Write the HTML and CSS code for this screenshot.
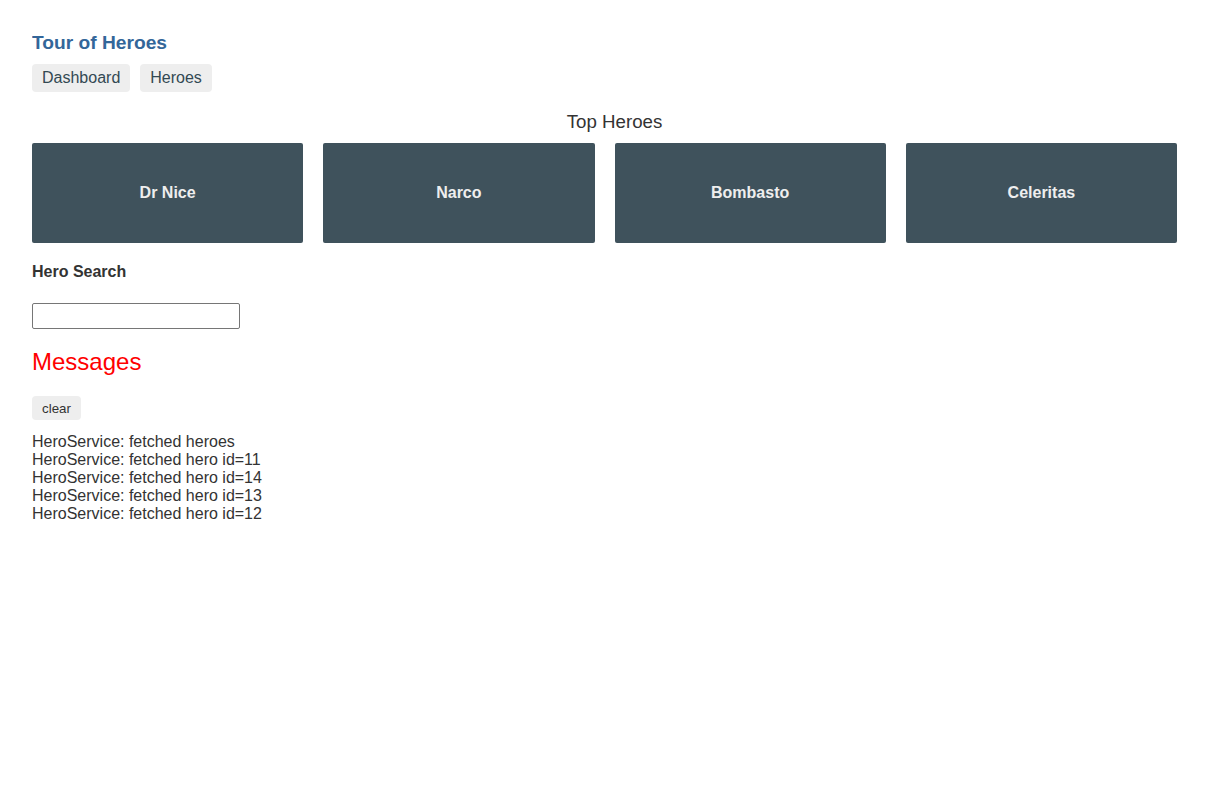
FILE: index.html
```html
<!DOCTYPE html>
<html>
	<head>
		<meta charset="utf-8" />
		<title>Tour of Heroes</title>
		<link rel="stylesheet" href="styles.css">
	</head>
	<body>
		<h1>Tour of Heroes</h1>
		<nav class="nav">
			<a href="#">Dashboard</a>
			<a href="#">Heroes</a>
		</nav>
		<h3 class="top-title">Top Heroes</h3>
		<div class="grid">
			<a class="module" href="#"><h4>Dr Nice</h4></a>
			<a class="module" href="#"><h4>Narco</h4></a>
			<a class="module" href="#"><h4>Bombasto</h4></a>
			<a class="module" href="#"><h4>Celeritas</h4></a>
		</div>
		<div class="search">
			<h4>Hero Search</h4>
			<input class="search-box" type="text" />
		</div>
		<div class="messages">
			<h2>Messages</h2>
			<button class="clear">clear</button>
			<div>HeroService: fetched heroes</div>
			<div>HeroService: fetched hero id=11</div>
			<div>HeroService: fetched hero id=14</div>
			<div>HeroService: fetched hero id=13</div>
			<div>HeroService: fetched hero id=12</div>
		</div>
	</body>
</html>
```

FILE: styles.css
```css
*{
	box-sizing: border-box;
}
body{
	margin: 32px;
	color: #333;
	font-family: "Liberation Sans", Arial, sans-serif;
	font-size: 16px;
}
a{
	text-decoration: none;
}
h1{
	margin: 0;
	font-size: 19.2px;
	color: #369;
}
/*导航*/
.nav{
	display: flex;
	gap: 10px;
	margin-top: 10px;
}
.nav a{
	padding: 5px 10px;
	background-color: #eee;
	border-radius: 4px;
	color: #334953;
}
/*首页*/
.top-title{
	margin: 19px 0 10px;
	font-size: 18.7px;
	font-weight: normal;
	text-align: center;
}
.grid{
	display: grid;
	grid-template-columns: repeat(4, 1fr);
	gap: 20px;
	padding-right: 20px;
}
.module{
	display: flex;
	align-items: center;
	justify-content: center;
	height: 100px;
	background-color: #3f525c;
	border-radius: 2px;
	color: #eee;
}
.module h4{
	margin: 0;
	font-size: 16px;
}
/*搜索*/
.search h4{
	margin: 20px 0 22px;
	font-size: 16px;
}
.search-box{
	display: block;
	width: 208px;
	height: 26px;
	border: 1px solid #767676;
	border-radius: 2px;
	font-family: inherit;
}
/*消息*/
.messages h2{
	margin: 19px 0 20px;
	font-size: 24px;
	font-weight: normal;
	color: red;
}
.clear{
	display: block;
	height: 24px;
	padding: 0 10px;
	margin-bottom: 13px;
	border: none;
	border-radius: 4px;
	background-color: #eee;
	color: #333;
	font-family: inherit;
	font-size: 13.33px;
}
```
